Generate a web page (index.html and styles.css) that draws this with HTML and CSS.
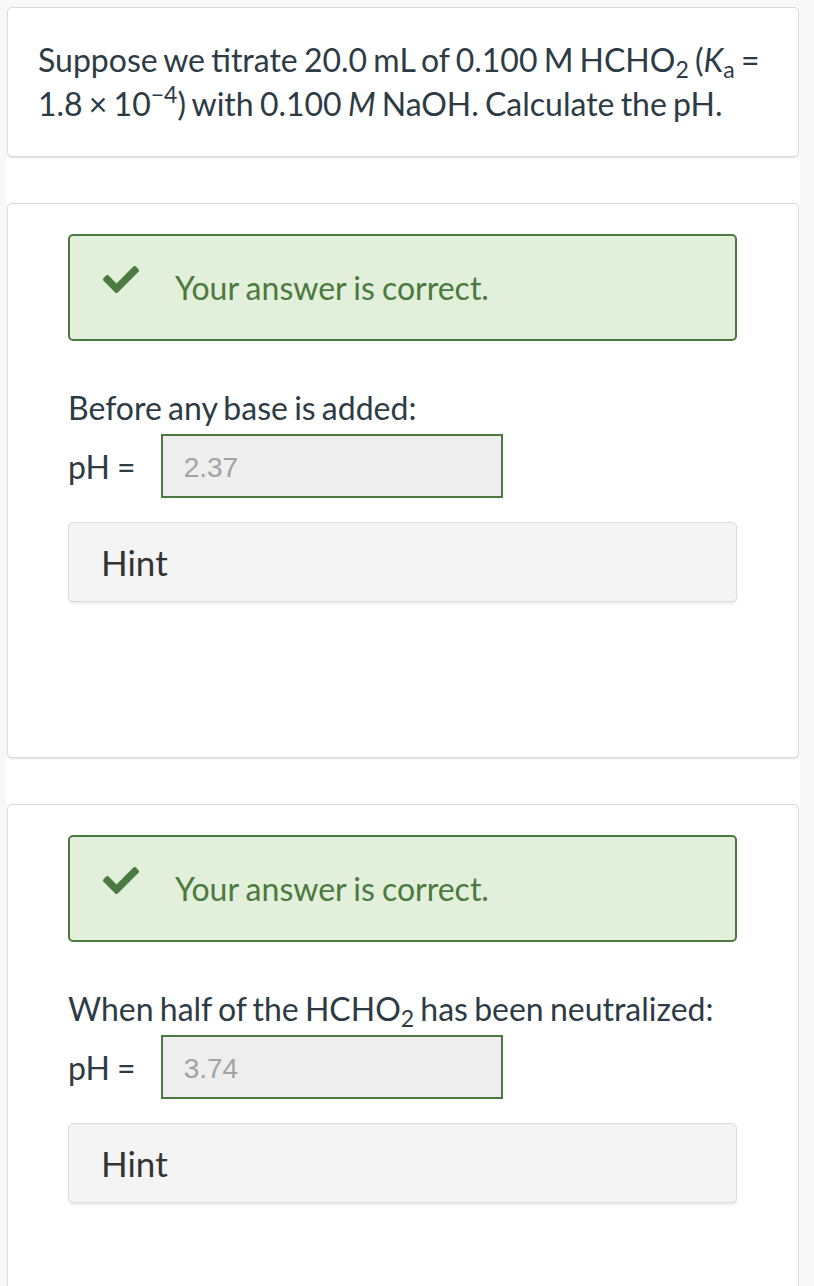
FILE: index.html
```html
<!DOCTYPE html>
<html>
<head>
<meta charset="utf-8">
<link rel="stylesheet" href="styles.css">
</head>
<body>
<div class="page">
  <div class="card intro">
    <p class="question">Suppose we titrate 20.0 mL of 0.100 M HCHO<sub>2</sub> (<i>K</i><sub>a</sub> = 1.8 × 10<sup>−4</sup>) with 0.100 <i>M</i> NaOH. Calculate the pH.</p>
  </div>

  <div class="card part">
    <div class="alert">
      <svg class="check" viewBox="0 70 512 372" width="36" height="27"><path d="M173.898 439.404l-166.4-166.4c-9.997-9.997-9.997-26.206 0-36.204l36.203-36.204c9.997-9.998 26.207-9.998 36.204 0L192 312.69 432.095 72.596c9.997-9.997 26.207-9.997 36.204 0l36.203 36.204c9.997 9.997 9.997 26.206 0 36.204l-294.4 294.401c-9.998 9.997-26.207 9.997-36.204-.001z" fill="#4a7a3f"/></svg>
      <span class="alert-text">Your answer is correct.</span>
    </div>
    <p class="prompt">Before any base is added:</p>
    <div class="answer-row">
      <span class="label">pH =</span>
      <div class="field">2.37</div>
    </div>
    <div class="hint">Hint</div>
  </div>

  <div class="card part last">
    <div class="alert">
      <svg class="check" viewBox="0 70 512 372" width="36" height="27"><path d="M173.898 439.404l-166.4-166.4c-9.997-9.997-9.997-26.206 0-36.204l36.203-36.204c9.997-9.998 26.207-9.998 36.204 0L192 312.69 432.095 72.596c9.997-9.997 26.207-9.997 36.204 0l36.203 36.204c9.997 9.997 9.997 26.206 0 36.204l-294.4 294.401c-9.998 9.997-26.207 9.997-36.204-.001z" fill="#4a7a3f"/></svg>
      <span class="alert-text">Your answer is correct.</span>
    </div>
    <p class="prompt">When half of the HCHO<sub>2</sub> has been neutralized:</p>
    <div class="answer-row">
      <span class="label">pH =</span>
      <div class="field">3.74</div>
    </div>
    <div class="hint">Hint</div>
  </div>
</div>
</body>
</html>
```

FILE: styles.css
```css
html, body {
  margin: 0;
  padding: 0;
}
body {
  background: #f8f8f8;
  font-family: Lato, "Open Sans", sans-serif;
  color: #2d3b45;
  word-spacing: -2px;
}
.page {
  margin: 7px 0 0 6px;
  width: 794px;
  background: #ffffff;
  display: flex;
  flex-direction: column;
  gap: 46px;
  height: 1279px;
  overflow: hidden;
}
.card {
  margin: 0 1px;
  background: #fff;
  border: 1px solid #d9d9d9;
  border-radius: 5px;
  box-shadow: 0 1px 2px rgba(0, 0, 0, 0.12);
}
.intro {
  padding: 30px 24px 30px 30px;
}
.question {
  margin: 0;
  font-size: 32px;
  line-height: 44px;
}
sub, sup {
  font-size: 0.72em;
  line-height: 0;
}
sub {
  vertical-align: -0.25em;
}
sup {
  vertical-align: 0.55em;
}
.part {
  padding: 30px 61px 155px 60px;
}
.last {
  flex: 1 0 auto;
}
.alert {
  height: 103px;
  border: 2px solid #4a7a3f;
  border-radius: 5px;
  background: #e2efda;
  display: flex;
  align-items: center;
  padding-left: 33px;
  gap: 36px;
}
.check {
  display: block;
  margin-top: -16px;
}
.alert-text {
  color: #4a7a3f;
  font-size: 32px;
  word-spacing: -1px;
}
.prompt {
  margin: 48px 0 7px 0;
  font-size: 32px;
  line-height: 38px;
}
.answer-row {
  display: flex;
  align-items: center;
  gap: 25px;
}
.label {
  font-size: 32px;
  word-spacing: -1px;
}
.field {
  box-sizing: border-box;
  width: 342px;
  height: 64px;
  border: 2px solid #4a7a3f;
  background: #eeeeee;
  color: #a3a3a3;
  font-family: "Liberation Sans", Arial, sans-serif;
  font-size: 28px;
  display: flex;
  align-items: center;
  padding: 4px 0 0 21px;
}
.hint {
  margin-top: 24px;
  height: 78px;
  border: 1px solid #dcdcdc;
  border-radius: 5px;
  background: #f4f4f4;
  box-shadow: 0 2px 2px rgba(0, 0, 0, 0.08);
  display: flex;
  align-items: center;
  padding-left: 32px;
  font-size: 35px;
  color: #333;
}
```
